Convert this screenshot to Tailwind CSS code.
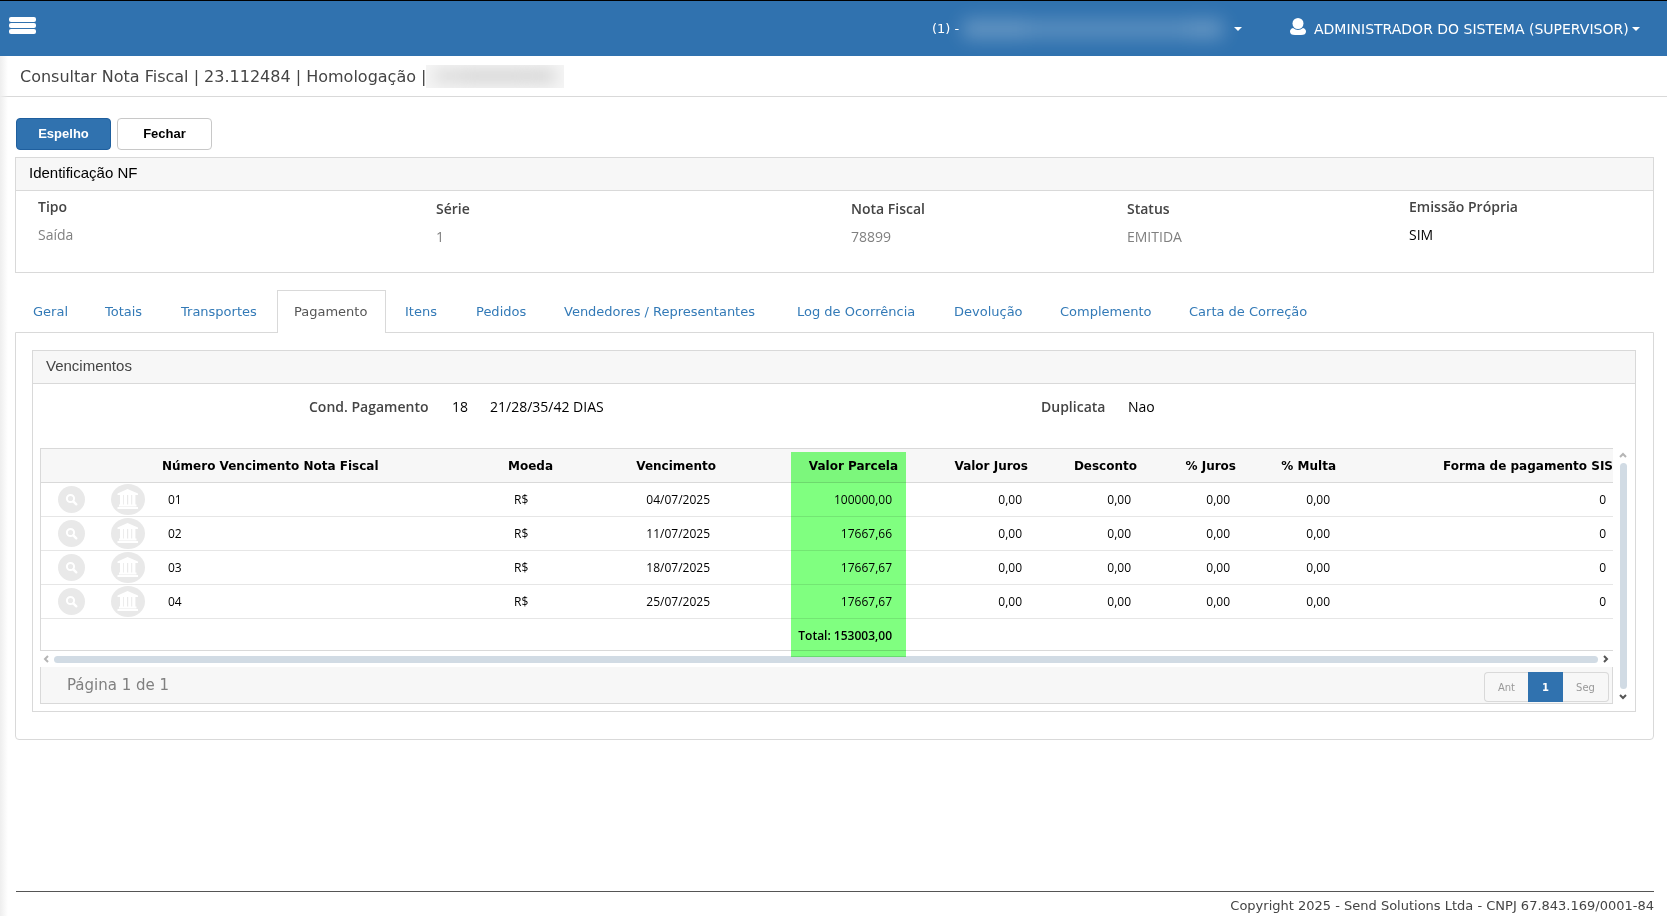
<!DOCTYPE html>
<html lang="pt-BR">
<head>
  <meta charset="UTF-8" />
  <meta name="viewport" content="width=device-width, initial-scale=1.0" />
  <title>Consultar Nota Fiscal</title>
  <script src="https://cdn.jsdelivr.net/npm/@tailwindcss/browser@4"></script>
</head>
<body class="relative min-h-screen flex flex-col bg-white text-[13px] text-[#444] font-['DejaVu_Sans',Verdana,sans-serif]">

<svg class="hidden">
  <symbol id="search" viewBox="0 0 27 27">
    <circle cx="13.5" cy="13.5" r="13.5" fill="#e9e9e9"/>
    <circle cx="12.5" cy="12.5" r="3.6" fill="none" stroke="#fff" stroke-width="2"/>
    <path d="M15.3 15.3l3 3" stroke="#fff" stroke-width="2.4" stroke-linecap="round"/>
  </symbol>
  <symbol id="bank" viewBox="0 0 34 31" preserveAspectRatio="none">
    <ellipse cx="17" cy="15.5" rx="17" ry="15.5" fill="#e9e9e9"/>
    <path d="M16.5 5L27 9.500V11H6.500V9.500ZM9 11h3.200v9.500H9zM13 11h3v9.500h-3zM17.200 11h3v9.500h-3zM21.200 11h3.200v9.500h-3.200zM8 20.500h17.500v2H8zM6.500 23h20.500v2h-20.500z" fill="#fff"/>
  </symbol>
</svg>

<header class="h-14 shrink-0 flex items-center bg-[#3072af] border-t border-black text-white">
  <button type="button" aria-label="Menu" class="ml-[9px] mb-1.5 flex flex-col gap-px">
    <span class="w-[27px] h-[5px] rounded-xs bg-white"></span>
    <span class="w-[27px] h-[5px] rounded-xs bg-white"></span>
    <span class="w-[27px] h-[5px] rounded-xs bg-white"></span>
  </button>
  <button type="button" class="ml-auto w-[310px] flex items-center whitespace-nowrap">
    <span>(1) -</span>
    <span class="ml-1 flex blur-[9px]">
      <span class="w-16 h-5 bg-white/25"></span>
      <span class="w-12 h-5 bg-white/20"></span>
      <span class="w-12 h-5 bg-white/20"></span>
      <span class="w-16 h-5 bg-white/20"></span>
      <span class="w-9 h-5 bg-white/25"></span>
    </span>
    <span class="ml-auto border-x-4 border-t-4 border-x-transparent border-t-white"></span>
  </button>
  <button type="button" class="ml-12 mr-[27px] w-[350px] flex items-center whitespace-nowrap">
    <svg class="w-4 h-[17px] mb-1 mr-2" viewBox="0 0 16 17" fill="#fff"><ellipse cx="8" cy="5.500" rx="5.500" ry="5.500"/><path d="M3 10Q5.500 12 8 12T13 10Q16 11 16 13.500Q16 17 11 17H5Q0 17 0 13.500Q0 11 3 10Z"/></svg>
    <span class="text-sm">ADMINISTRADOR DO SISTEMA (SUPERVISOR)</span>
    <span class="ml-auto border-x-4 border-t-4 border-x-transparent border-t-white"></span>
  </button>
</header>

<div class="absolute left-0 top-14 bottom-0 w-2 bg-linear-to-r from-[#eee] to-white/0"></div>

<div class="h-[41px] shrink-0 pl-5 flex items-center border-b border-[#d9d9d9]">
  <h1 class="pt-0.5 text-base whitespace-nowrap">Consultar Nota Fiscal | 23.112484 | Homologação |</h1>
  <span class="w-[138px] h-[23px] flex items-center justify-center bg-[#f5f5f5] overflow-hidden">
    <span class="w-7 h-3 bg-black/12 blur-[8px]"></span>
    <span class="w-16 h-3 bg-black/15 blur-[8px]"></span>
    <span class="w-7 h-3 bg-black/15 blur-[8px]"></span>
  </span>
</div>

<main class="pl-[15px] pr-[13px] pt-[21px]">
  <div class="pl-px flex gap-1.5 font-['Liberation_Sans',Arial,sans-serif] text-[13px] font-bold">
    <button type="button" class="w-[95px] h-8 rounded-sm border border-[#1f5f9e] bg-[#3072af] text-white">Espelho</button>
    <button type="button" class="w-[95px] h-8 rounded-sm border border-[#c8c8c8] bg-white text-black">Fechar</button>
  </div>

  <section class="mt-[7px] border border-[#d9d9d9]">
    <h2 class="h-[33px] pl-[13px] pb-px flex items-center bg-[#f7f7f7] border-b border-[#d9d9d9] font-['Liberation_Sans',Arial,sans-serif] text-[15px] text-black">Identificação NF</h2>
    <dl class="h-[81px] pl-[22px] pt-1.5 grid grid-cols-[398fr_415fr_276fr_282fr_244fr] font-['Open_Sans',sans-serif] text-sm leading-5">
      <div>
        <dt class="font-semibold">Tipo</dt>
        <dd class="mt-2 text-[#808080]">Saída</dd>
      </div>
      <div class="pt-0.5">
        <dt class="font-semibold">Série</dt>
        <dd class="mt-2 text-[#808080]">1</dd>
      </div>
      <div class="pt-0.5">
        <dt class="font-semibold">Nota Fiscal</dt>
        <dd class="mt-2 text-[#808080]">78899</dd>
      </div>
      <div class="pt-0.5">
        <dt class="font-semibold">Status</dt>
        <dd class="mt-2 text-[#808080]">EMITIDA</dd>
      </div>
      <div>
        <dt class="font-semibold">Emissão Própria</dt>
        <dd class="mt-2 text-black">SIM</dd>
      </div>
    </dl>
  </section>

  <nav class="mt-[17px] pl-px flex gap-0.5 text-[#337ab7] whitespace-nowrap">
    <a href="#" class="w-[70px] h-[42px] pl-[17px] pt-0.5 flex items-center">Geral</a>
    <a href="#" class="w-[74px] h-[42px] pl-[17px] pt-0.5 flex items-center">Totais</a>
    <a href="#" class="w-[111px] h-[42px] pl-[17px] pt-0.5 flex items-center">Transportes</a>
    <a href="#" class="w-[109px] relative h-[43px] -mb-px pl-4 flex items-center bg-white border border-b-0 border-[#d9d9d9] text-[#555]">Pagamento</a>
    <a href="#" class="w-[69px] h-[42px] pl-[17px] pt-0.5 flex items-center">Itens</a>
    <a href="#" class="w-[86px] h-[42px] pl-[17px] pt-0.5 flex items-center">Pedidos</a>
    <a href="#" class="w-[231px] h-[42px] pl-[17px] pt-0.5 flex items-center">Vendedores / Representantes</a>
    <a href="#" class="w-[155px] h-[42px] pl-[17px] pt-0.5 flex items-center">Log de Ocorrência</a>
    <a href="#" class="w-[104px] h-[42px] pl-[17px] pt-0.5 flex items-center">Devolução</a>
    <a href="#" class="w-[127px] h-[42px] pl-[17px] pt-0.5 flex items-center">Complemento</a>
    <a href="#" class="h-[42px] px-[17px] pt-0.5 flex items-center">Carta de Correção</a>
  </nav>

  <div class="border border-[#d9d9d9] rounded-b-sm pl-4 pr-[17px] pt-[17px] pb-[27px]">
    <section class="border border-[#d9d9d9]">
      <h2 class="h-[33px] pl-[13px] pb-px flex items-center bg-[#f7f7f7] border-b border-[#d9d9d9] font-['Liberation_Sans',Arial,sans-serif] text-[15px]">Vencimentos</h2>

      <div class="h-16 pt-[13px] pl-[276px] flex font-['Open_Sans',sans-serif] text-sm leading-5 text-black">
        <span class="w-[143px] font-semibold text-[#444]">Cond. Pagamento</span>
        <span class="w-[38px]">18</span>
        <span class="w-[551px]">21/28/35/42 DIAS</span>
        <span class="w-[87px] font-semibold text-[#444]">Duplicata</span>
        <span>Nao</span>
      </div>

      <div class="pl-[7px] pr-2 pb-[7px] flex">
        <div class="relative min-w-0 flex-1">
          <div class="overflow-hidden border-l border-y border-[#d9d9d9]">
            <table class="w-full table-fixed text-black text-xs whitespace-nowrap">
              <colgroup>
                <col class="w-[61px]"><col class="w-[52px]"><col class="w-[346px]"><col class="w-[120px]"><col class="w-[104px]"><col class="w-[182px]"><col class="w-[130px]"><col class="w-[109px]"><col class="w-[99px]"><col class="w-[100px]"><col>
              </colgroup>
              <thead>
                <tr class="h-[33px] bg-[#f7f7f7] border-b border-[#d9d9d9] text-right">
                  <th></th>
                  <th></th>
                  <th class="pl-2 pt-0.5 text-left">Número Vencimento Nota Fiscal</th>
                  <th class="pl-2 pt-0.5 text-left">Moeda</th>
                  <th class="pr-2 pt-0.5">Vencimento</th>
                  <th class="pr-2 pt-0.5">Valor Parcela</th>
                  <th class="pr-2 pt-0.5">Valor Juros</th>
                  <th class="pr-2 pt-0.5">Desconto</th>
                  <th class="pr-2 pt-0.5">% Juros</th>
                  <th class="pr-2 pt-0.5">% Multa</th>
                  <th class="pt-0.5">Forma de pagamento SIS</th>
                </tr>
              </thead>
              <tbody id="rows" class="font-['Open_Sans',sans-serif]"></tbody>
              <tfoot class="font-['Open_Sans',sans-serif]">
                <tr class="h-8 text-right font-semibold">
                  <td colspan="5"></td>
                  <td class="pr-3.5 pt-1">Total: 153003,00</td>
                  <td colspan="5"></td>
                </tr>
              </tfoot>
            </table>
          </div>

          <div class="h-4 pl-[3px] pr-1 flex items-center gap-[5px]">
            <svg class="w-1.5 h-2" viewBox="0 0 6 8" fill="none" stroke="#b5b5b5" stroke-width="2"><path d="M5 1L2 4l3 3"/></svg>
            <span class="flex-1 h-[7px] rounded-full bg-[#d1dbe4]"></span>
            <svg class="w-1.5 h-2" viewBox="0 0 6 8" fill="none" stroke="#555" stroke-width="2"><path d="M1 1l3 3L1 7"/></svg>
          </div>

          <div class="h-[37px] pl-[26px] pr-[3px] flex items-center justify-between bg-[#f7f7f7] border border-t-0 border-[#d9d9d9]">
            <span class="text-[15px] text-[#808080]">Página 1 de 1</span>
            <div class="mt-1 flex h-[30px] text-[10px] text-[#999]">
              <button type="button" class="w-11 border border-r-0 border-[#d9d9d9] rounded-l-sm">Ant</button>
              <button type="button" class="w-[35px] bg-[#3072af] text-white font-bold">1</button>
              <button type="button" class="w-[46px] border border-l-0 border-[#d9d9d9] rounded-r-sm">Seg</button>
            </div>
          </div>

          <!-- marca-texto sobre a coluna Valor Parcela -->
          <div class="absolute left-[751px] top-1 w-[115px] h-[205px] bg-[#80ff80] mix-blend-multiply"></div>
        </div>

        <div class="w-[14px] pt-1 pb-1 flex flex-col items-end gap-[5px]">
          <svg class="w-2 h-1.5" viewBox="0 0 8 6" fill="none" stroke="#b5b5b5" stroke-width="2"><path d="M1 5l3-3 3 3"/></svg>
          <span class="flex-1 w-[7px] rounded-full bg-[#d1dbe4]"></span>
          <svg class="w-2 h-1.5" viewBox="0 0 8 6" fill="none" stroke="#555" stroke-width="2"><path d="M1 1l3 3 3-3"/></svg>
        </div>
      </div>
    </section>
  </div>
</main>

<footer class="mt-auto ml-4 mr-[13px] h-[25px] pt-1.5 border-t border-[#555] text-right leading-4">
  Copyright 2025 - Send Solutions Ltda - CNPJ 67.843.169/0001-84
</footer>

<script>
  const parcelas = [
    ["01", "04/07/2025", "100000,00"],
    ["02", "11/07/2025", "17667,66"],
    ["03", "18/07/2025", "17667,67"],
    ["04", "25/07/2025", "17667,67"],
  ];

  document.getElementById("rows").innerHTML = parcelas.map(([numero, vencimento, valor]) => `
    <tr class="h-[34px] border-b border-[#e6e6e6] text-right">
      <td><button type="button" aria-label="Consultar" class="block mx-auto"><svg class="w-[27px] h-[27px]"><use href="#search"/></svg></button></td>
      <td><button type="button" aria-label="Banco" class="block mx-auto"><svg class="w-[34px] h-[31px]"><use href="#bank"/></svg></button></td>
      <td class="pl-3.5 pt-0.5 text-left">${numero}</td>
      <td class="pl-3.5 pt-0.5 text-left">R$</td>
      <td class="pr-3.5 pt-0.5">${vencimento}</td>
      <td class="pr-3.5 pt-0.5">${valor}</td>
      <td class="pr-3.5 pt-0.5">0,00</td>
      <td class="pr-3.5 pt-0.5">0,00</td>
      <td class="pr-3.5 pt-0.5">0,00</td>
      <td class="pr-3.5 pt-0.5">0,00</td>
      <td class="pr-[7px] pt-0.5">0</td>
    </tr>`).join("");
</script>
</body>
</html>
